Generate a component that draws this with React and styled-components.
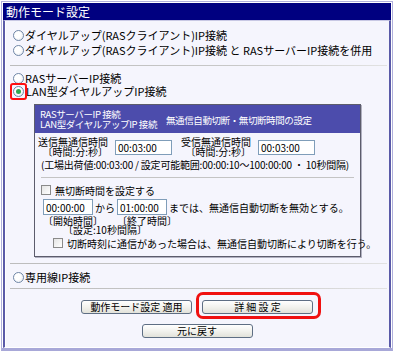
import React from 'react'
import styled, { createGlobalStyle, css } from 'styled-components'

const GlobalStyle = createGlobalStyle`
  html, body {
    margin: 0;
    padding: 0;
    background: #ffffff;
  }
  body {
    font-family: "Noto Sans CJK JP", "DejaVu Sans", sans-serif;
    color: #000;
  }
`

const Radio = ({ checked, marked }) => {
  const dot = (
    <Style.Radio>
      {checked ? <Style.RadioDot /> : null}
    </Style.Radio>
  )
  return marked ? <Style.Marker>{dot}</Style.Marker> : dot
}

const TimeBlock = ({ label, value }) => (
  <Style.TimeGroup>
    <Style.TimeLabel>
      <span>{label}</span>
      <span>〔時間:分:秒〕</span>
    </Style.TimeLabel>
    <Style.TimeInput defaultValue={value} />
  </Style.TimeGroup>
)

export default function App() {
  return (
    <>
      <GlobalStyle />
      <Style.Frame>
        <Style.TitleBar>動作モード設定</Style.TitleBar>
        <Style.Body>
          <Style.OptionRow $h={15}>
            <Radio />
            ダイヤルアップ(RASクライアント)IP接続
          </Style.OptionRow>
          <Style.OptionRow $h={15}>
            <Radio />
            ダイヤルアップ(RASクライアント)IP接続 と RASサーバーIP接続を併用
          </Style.OptionRow>
          <Style.Separator $top={7} $bottom={6} />
          <Style.OptionRow $h={13}>
            <Radio />
            RASサーバーIP接続
          </Style.OptionRow>
          <Style.OptionRow $h={13}>
            <Radio checked marked />
            LAN型ダイヤルアップIP接続
          </Style.OptionRow>

          <Style.Panel>
            <Style.PanelHead>
              <Style.HeadTitle>
                <span>RASサーバーIP 接続</span>
                <span>LAN型ダイヤルアップIP 接続</span>
              </Style.HeadTitle>
              <Style.HeadCaption>無通信自動切断・無切断時間の設定</Style.HeadCaption>
            </Style.PanelHead>
            <Style.PanelBody>
              <Style.TimeRow>
                <TimeBlock label="送信無通信時間" value="00:03:00" />
                <TimeBlock label="受信無通信時間" value="00:03:00" />
              </Style.TimeRow>
              <Style.Note>
                (工場出荷値:00:03:00 / 設定可能範囲:00:00:10〜100:00:00 ・ 10秒間隔)
              </Style.Note>
              <Style.InnerSeparator />
              <Style.CheckRow>
                <Style.Check />
                無切断時間を設定する
              </Style.CheckRow>
              <Style.RangeRow>
                <Style.RangeInput defaultValue="00:00:00" />
                <span>から</span>
                <Style.RangeInput defaultValue="01:00:00" />
                <span>までは、無通信自動切断を無効とする。</span>
              </Style.RangeRow>
              <Style.RangeLabels>
                <Style.RangeLabel>〔開始時間〕</Style.RangeLabel>
                <Style.RangeLabel>〔終了時間〕</Style.RangeLabel>
              </Style.RangeLabels>
              <Style.StepNote>〔設定:10秒間隔〕</Style.StepNote>
              <Style.CheckRow $indent={12} $top={4}>
                <Style.Check />
                切断時刻に通信があった場合は、無通信自動切断により切断を行う。
              </Style.CheckRow>
            </Style.PanelBody>
          </Style.Panel>

          <Style.Separator $top={6} $bottom={6} />
          <Style.OptionRow $h={14}>
            <Radio />
            専用線IP接続
          </Style.OptionRow>
          <Style.Separator $top={4} $bottom={11} />

          <Style.ButtonRow>
            <Style.Button>動作モード設定 適用</Style.Button>
            <Style.Highlight>
              <Style.Button>詳 細 設 定</Style.Button>
            </Style.Highlight>
          </Style.ButtonRow>
          <Style.ButtonRow $top={10}>
            <Style.Button>元に戻す</Style.Button>
          </Style.ButtonRow>
        </Style.Body>
      </Style.Frame>
    </>
  )
}

const Style = {}

Style.Frame = styled.div`
  box-sizing: border-box;
  width: 392px;
  height: 350px;
  margin: 1px;
  padding: 1px 1px 0;
  border: 1px solid #b0b0dc;
  border-bottom: 3px solid #a8a8d8;
  display: flex;
  flex-direction: column;
  background: #ffffff;
`

Style.TitleBar = styled.div`
  height: 17px;
  background: #000080;
  color: #ffffff;
  font-size: 12px;
  line-height: 17px;
  padding-left: 3px;
`

Style.Body = styled.div`
  flex: 1;
  display: flex;
  flex-direction: column;
  padding: 7px 2px 0 5px;
  background: #f5f5fd;
  border: 2px solid #5a5aa8;
  border-top: 1px solid #c8c8e4;
  border-bottom: 1px solid #ffffff;
  box-shadow: inset 1px 0 0 #ffffff;
  font-size: 11px;
`

Style.OptionRow = styled.div`
  height: ${(p) => p.$h}px;
  display: flex;
  align-items: center;
  gap: 1px;
  padding-left: 3px;
  white-space: nowrap;
  line-height: 1;
`

Style.Radio = styled.span`
  box-sizing: border-box;
  width: 11px;
  height: 11px;
  border-radius: 50%;
  border: 1px solid #6f86a6;
  background: radial-gradient(circle at 40% 40%, #ffffff 40%, #dfe4ec 100%);
  display: inline-flex;
  align-items: center;
  justify-content: center;
  flex: none;
`

Style.RadioDot = styled.span`
  width: 5px;
  height: 5px;
  border-radius: 50%;
  background: #32a852;
`

Style.Marker = styled.span`
  display: inline-flex;
  padding: 1px;
  margin: -3px;
  margin-right: -2px;
  border: 2px solid #ff1010;
  border-radius: 3px;
`

Style.Separator = styled.div`
  height: 1px;
  margin: ${(p) => p.$top}px 0 ${(p) => p.$bottom}px;
  background: linear-gradient(to right, #bcbcbc 0%, #c8c8c8 60%, #e2e2e2 100%);
  flex: none;
`

Style.Panel = styled.div`
  width: 325px;
  margin: 6px 0 0 24px;
  border: 1px solid #5c5c6c;
  box-shadow: 1px 1px 0 #b0b0c0;
  background: #f5f5fd;
  font-size: 10px;
`

Style.PanelHead = styled.div`
  height: 28px;
  background: #4c4cac;
  color: #ffffff;
  display: grid;
  grid-template-columns: 126px 1fr;
  align-items: center;
  padding-left: 5px;
`

Style.HeadTitle = styled.div`
  display: flex;
  flex-direction: column;
  line-height: 10px;
  font-size: 9.5px;
  letter-spacing: -0.4px;
  white-space: nowrap;
`

Style.HeadCaption = styled.div`
  white-space: nowrap;
  padding-top: 1px;
  font-size: 9.5px;
  letter-spacing: -0.4px;
`

Style.PanelBody = styled.div`
  padding: 4px 6px 8px 6px;
`

Style.TimeRow = styled.div`
  display: flex;
  gap: 12px;
`

Style.TimeGroup = styled.div`
  display: flex;
  align-items: center;
  gap: 7px;
`

Style.TimeLabel = styled.div`
  width: 67px;
  display: flex;
  flex-direction: column;
  align-items: flex-end;
  line-height: 10px;
  white-space: nowrap;
`

const fieldBase = css`
  box-sizing: border-box;
  height: 15px;
  border: 1px solid #7f9db9;
  background: #ffffff;
  font-family: inherit;
  font-size: 10px;
  padding: 0 2px;
  color: #000;
  outline: none;
`

Style.TimeInput = styled.input`
  ${fieldBase};
  width: 57px;
`

Style.Note = styled.div`
  margin-top: 3px;
  line-height: 10px;
  white-space: nowrap;
  letter-spacing: -0.2px;
`

Style.InnerSeparator = styled.div`
  height: 1px;
  margin: 7px 0 7px;
  background: #c4c4c4;
`

Style.CheckRow = styled.div`
  display: flex;
  align-items: center;
  gap: 4px;
  height: 10px;
  margin-top: ${(p) => p.$top || 0}px;
  padding-left: ${(p) => p.$indent || 0}px;
  white-space: nowrap;
`

Style.Check = styled.span`
  box-sizing: border-box;
  width: 10px;
  height: 10px;
  border: 1px solid #8a8a8a;
  background: linear-gradient(135deg, #e4e4e4, #ffffff);
  flex: none;
`

Style.RangeRow = styled.div`
  display: flex;
  align-items: center;
  margin-top: 4px;
  padding-left: 2px;
  gap: 2px;
  white-space: nowrap;
`

Style.RangeInput = styled.input`
  ${fieldBase};
  width: 50px;
  height: 16px;
`

Style.RangeLabels = styled.div`
  display: flex;
  gap: 24px;
  padding-left: 2px;
  line-height: 9px;
  margin-top: 1px;
`

Style.RangeLabel = styled.span`
  width: 50px;
  white-space: nowrap;
`

Style.StepNote = styled.div`
  padding-left: 22px;
  line-height: 9px;
`

Style.ButtonRow = styled.div`
  display: flex;
  justify-content: center;
  gap: 10px;
  margin-top: ${(p) => p.$top || 0}px;
  padding-right: 3px;
`

Style.Button = styled.button`
  box-sizing: border-box;
  width: 111px;
  height: 14px;
  padding: 0;
  border: 1px solid #5e6e84;
  border-radius: 3px;
  background: linear-gradient(#ffffff, #f2f2ee 50%, #e2e2da);
  font-family: inherit;
  font-size: 10px;
  line-height: 12px;
  color: #000;
  white-space: nowrap;
`

Style.Highlight = styled.span`
  position: relative;
  display: inline-flex;
  &::after {
    content: '';
    position: absolute;
    left: -6px;
    right: -8px;
    top: -8px;
    bottom: -5px;
    border: 3px solid #f01010;
    border-radius: 7px;
    pointer-events: none;
  }
`
